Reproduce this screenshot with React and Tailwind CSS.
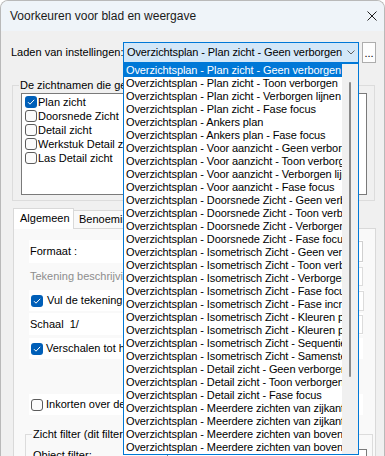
import React from "react";

const items = [
  "Overzichtsplan - Plan zicht - Geen verborgen",
  "Overzichtsplan - Plan zicht - Toon verborgen",
  "Overzichtsplan - Plan zicht - Verborgen lijnen",
  "Overzichtsplan - Plan zicht - Fase focus",
  "Overzichtsplan - Ankers plan",
  "Overzichtsplan - Ankers plan - Fase focus",
  "Overzichtsplan - Voor aanzicht - Geen verborgen",
  "Overzichtsplan - Voor aanzicht - Toon verborgen",
  "Overzichtsplan - Voor aanzicht - Verborgen lijnen",
  "Overzichtsplan - Voor aanzicht - Fase focus",
  "Overzichtsplan - Doorsnede Zicht - Geen verborgen",
  "Overzichtsplan - Doorsnede Zicht - Toon verborgen",
  "Overzichtsplan - Doorsnede Zicht - Verborgen lijnen",
  "Overzichtsplan - Doorsnede Zicht - Fase focus",
  "Overzichtsplan - Isometrisch Zicht - Geen verborgen",
  "Overzichtsplan - Isometrisch Zicht - Toon verborgen",
  "Overzichtsplan - Isometrisch Zicht - Verborgen lijnen",
  "Overzichtsplan - Isometrisch Zicht - Fase focus",
  "Overzichtsplan - Isometrisch Zicht - Fase incrementeel",
  "Overzichtsplan - Isometrisch Zicht - Kleuren per fase",
  "Overzichtsplan - Isometrisch Zicht - Kleuren per profiel",
  "Overzichtsplan - Isometrisch Zicht - Sequentie",
  "Overzichtsplan - Isometrisch Zicht - Samenstellingen",
  "Overzichtsplan - Detail zicht - Geen verborgen",
  "Overzichtsplan - Detail zicht - Toon verborgen",
  "Overzichtsplan - Detail zicht - Fase focus",
  "Overzichtsplan - Meerdere zichten van zijkant",
  "Overzichtsplan - Meerdere zichten van zijkant - Fase focus",
  "Overzichtsplan - Meerdere zichten van boven",
  "Overzichtsplan - Meerdere zichten van boven - Fase focus",
];

function Check({ checked }) {
  if (checked) {
    return (
      <span className="w-[12px] h-[12px] rounded-[3px] bg-[#005fb8] flex items-center justify-center shrink-0">
        <svg width="12" height="12" viewBox="0 0 12 12">
          <path d="M3 6.2 L5 8.2 L9.2 3.8" fill="none" stroke="white" strokeWidth="1" />
        </svg>
      </span>
    );
  }
  return <span className="block w-[12px] h-[12px] rounded-[3px] border border-[#5c5c5c] bg-[#fbfbfb] shrink-0" />;
}

const views = ["Plan zicht", "Doorsnede Zicht", "Detail zicht", "Werkstuk Detail zicht", "Las Detail zicht"];

export default function App() {
  return (
    <div className="w-[385px] h-[456px] bg-white font-['Liberation_Sans',Arial,sans-serif] text-[11px] leading-[13px] text-black">
      <div className="w-[385px] h-[456px] overflow-hidden rounded-t-[8px] border border-b-0 border-[#b9b9b9] bg-[#f0f0f0] flex flex-col">
        {/* Title bar */}
        <div className="h-[30px] shrink-0 bg-[#eff4f9] flex items-center justify-between pl-[9px] pr-[7px]">
          <span className="text-[12px] leading-[14px] text-[#1a1a1a]">Voorkeuren voor blad en weergave</span>
          <svg width="10" height="10" viewBox="0 0 10 10">
            <path d="M0.5 0.5 L9.5 9.5 M9.5 0.5 L0.5 9.5" stroke="#1f1f1f" strokeWidth="1" />
          </svg>
        </div>

        {/* Laden van instellingen */}
        <div className="mt-[11px] h-[21px] shrink-0 flex items-center pl-[10px]">
          <span className="w-[112px] shrink-0 whitespace-nowrap">Laden van instellingen:</span>
          <div className="relative z-10 w-[236px] h-[21px] shrink-0">
            <div className="h-full border border-[#0078d7] bg-[#d3e7f8] flex items-center pl-[3px] pr-[3px]">
              <span className="flex-1 overflow-hidden whitespace-nowrap tracking-[-0.1px]">Overzichtsplan - Plan zicht - Geen verborgen</span>
              <svg width="8" height="5" viewBox="0 0 8 5" className="ml-[4px] shrink-0">
                <path d="M0.5 0.5 L4 4 L7.5 0.5" fill="none" stroke="#606060" strokeWidth="1" />
              </svg>
            </div>
            <div className="absolute left-0 top-full w-[236px] h-[392px] border border-[#0078d7] bg-white flex">
              <div className="w-[218px] flex flex-col tracking-[-0.1px]">
                {items.map((t, i) => (
                  <div
                    key={i}
                    className={
                      i === 0
                        ? "h-[13px] leading-[13px] pl-[2px] whitespace-nowrap overflow-hidden bg-[#0078d7] text-white"
                        : "h-[13px] leading-[13px] pl-[2px] whitespace-nowrap overflow-hidden"
                    }
                  >
                    {t}
                  </div>
                ))}
              </div>
              <div className="flex-1 bg-[#f0f0f0] pl-[7px] pt-[18px]">
                <div className="w-[2px] h-[295px] rounded-full bg-[#8a8a8a]" />
              </div>
            </div>
          </div>
          <div className="ml-[3px] w-[14px] h-[21px] shrink-0 border border-[#adadad] bg-[#fdfdfd] flex items-center justify-center text-[11px] leading-[11px] pt-[2px]">
            ...
          </div>
        </div>

        {/* Zichtnamen groupbox */}
        <fieldset className="mt-[15px] ml-[11px] w-[363px] h-[123px] min-w-0 shrink-0 border border-[#dcdcdc] pl-[8px] pr-[8px]">
          <legend className="ml-[-2px] px-[1px] leading-[14px]">De zichtnamen die getoond worden</legend>
          <div className="mt-[1px] w-[346px] h-[102px] border border-[#7a7a7a] bg-white pt-[1px] pl-[3px] flex flex-col">
            {views.map((v, i) => (
              <div key={v} className="h-[14px] flex items-center gap-[1px]">
                <Check checked={i === 0} />
                <span className="whitespace-nowrap">{v}</span>
              </div>
            ))}
          </div>
        </fieldset>

        {/* Tabs */}
        <div className="mt-[7px] ml-[12px] h-[21px] shrink-0 flex items-end">
          <div className="relative z-[1] w-[61px] h-[21px] bg-white border border-b-0 border-[#d9d9d9] pl-[6px] pt-[3px]">Algemeen</div>
          <div className="w-[82px] h-[19px] bg-[#f9f9f9] border border-l-0 border-[#d9d9d9] pl-[5px] pt-[2px] whitespace-nowrap">Benoemingen</div>
          <div className="w-[70px] h-[19px] bg-[#f9f9f9] border border-l-0 border-[#d9d9d9] pl-[5px] pt-[2px] whitespace-nowrap">Tekening</div>
        </div>

        {/* Tab page */}
        <div className="-mt-px ml-[12px] w-[363px] flex-1 border border-[#d9d9d9] bg-[#f9f9f9] flex flex-col">
          <div className="mt-[11px] ml-[15px] w-[334px] h-[23px] bg-white flex items-center justify-between">
            <span className="pl-[1px]">Formaat :</span>
            <div className="w-[200px] h-[21px] border border-[#d0d0d0] bg-white" />
          </div>
          <div className="mt-[2px] ml-[15px] w-[334px] h-[23px] flex items-center justify-between">
            <span className="pl-[1px] text-[#8d8d8d] whitespace-nowrap">Tekening beschrijving</span>
            <div className="w-[200px] h-[19px] border border-[#dcdcdc] bg-white" />
          </div>
          <div className="mt-[2px] ml-[15px] w-[335px] h-[21px] bg-white flex items-center">
            <span className="ml-[2px]"><Check checked /></span>
            <span className="ml-[4px] whitespace-nowrap">Vul de tekening beschrijving automatisch</span>
            <div className="ml-auto w-[60px] h-[20px] border border-[#dcdcdc] bg-white" />
          </div>
          <div className="mt-[2px] ml-[15px] w-[334px] h-[22px] bg-white flex items-center justify-between">
            <span className="pl-[1px] whitespace-pre">Schaal  1/</span>
            <div className="w-[60px] h-[19px] border border-[#dcdcdc] bg-white" />
          </div>
          <div className="mt-[3px] ml-[15px] w-[334px] h-[21px] bg-white flex items-center">
            <span className="ml-[2px]"><Check checked /></span>
            <span className="ml-[3px] whitespace-nowrap">Verschalen tot het blad formaat</span>
          </div>
          <div className="mt-[35px] ml-[15px] w-[334px] h-[21px] bg-white flex items-center">
            <span className="ml-[2px]"><Check /></span>
            <span className="ml-[3px] whitespace-nowrap">Inkorten over de lengte</span>
          </div>
          <fieldset className="mt-[12px] ml-[11px] w-[348px] min-w-0 flex-1 border border-b-0 border-[#dcdcdc] pl-[7px]">
            <legend className="ml-[-1px] px-[1px] leading-[14px] whitespace-nowrap">Zicht filter (dit filter is van toepassing)</legend>
            <div className="mt-[8px] h-[20px] flex items-start justify-between pr-[5px]">
              <span className="leading-[13px]">Object filter:</span>
              <div className="w-[200px] h-[20px] border border-[#7a7a7a] bg-white" />
            </div>
          </fieldset>
        </div>
      </div>
    </div>
  );
}
